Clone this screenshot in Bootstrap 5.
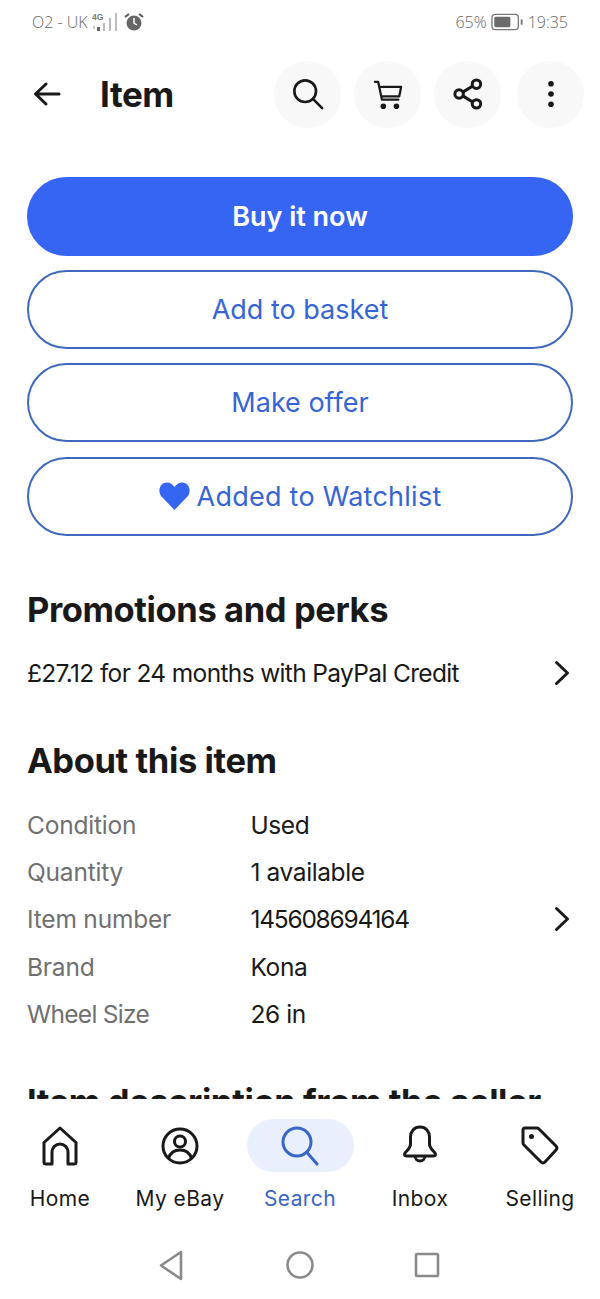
<!DOCTYPE html>
<html lang="en">
<head>
<meta charset="utf-8">
<title>Item</title>
<link href="https://cdn.jsdelivr.net/npm/bootstrap@5.3.0/dist/css/bootstrap.min.css" rel="stylesheet">
<style>
html,body{height:100%}
body{font-family:Inter,"Liberation Sans",sans-serif;color:#191919;background:#fff;overflow:hidden}
.screen{height:1299px;width:600px}
.statusbar{height:44px;padding:0 32px;color:#666;font-size:16px;font-weight:300;font-family:"Open Sans",sans-serif}
.appbar{height:100px;padding:0 16px 0 33px}
.appbar h1{font-size:35px;font-weight:700;margin:0 0 0 39px;letter-spacing:-.45px}
.roundbtn{width:67px;height:67px;border-radius:50%;background:#f8f8f8;border:0;padding:0}
.appbar .gapper{gap:13px}
.roundbtn.lastone{margin-left:3px}
.roundbtn.firstone{margin-right:0}
.content{padding:33px 27px 0;overflow:hidden;min-height:0}
.pillbtn{height:79px;border-radius:40px;font-size:27px;line-height:1;color:#3665d3;border:2px solid #3f69bd;background:#fff;padding:0}
.pillbtn.solid{background:#3665f3;border-color:#3665f3;color:#fff;font-weight:600}
.pillbtn .watch{letter-spacing:.25px}
.watchrow{gap:7px}
.stack{gap:14.2px}
.secthead{font-size:34.5px;font-weight:700;line-height:40px;margin:0;letter-spacing:-.4px}
.sect-promo{margin-top:54px}
.promo{margin-top:27px;font-size:24.5px;line-height:32px;letter-spacing:-.65px;padding-right:3px}
.sect-about{margin-top:52px}
.specs{margin-top:28px}
.spec{font-size:24.5px;line-height:32px;margin-bottom:15.4px;letter-spacing:-.2px;padding-right:3px}
.spec dt{font-weight:400;color:#707070;width:223.500px;flex:none;margin:0}
.spec dd{margin:0;letter-spacing:-.4px}
.spec dd.digits{letter-spacing:-1.25px}
.spec dt.wheel{letter-spacing:-.7px}
.sect-desc{margin-top:52px}
.tabbar{height:200px;background:#fff}
.tabs-row{padding-top:20px}
.tabitem{width:120px;font-size:21px;line-height:28px;color:#191919;gap:13px;letter-spacing:.4px;text-decoration:none}
.tabicon{height:53px;width:107px;border-radius:27px}
.tabitem.on{color:#3a66c4}
.tabitem.on .tabicon{background:#e9effc}
.softkeys{height:85px;gap:93px;padding-top:18px}
</style>
</head>
<body>
<div class="screen d-flex flex-column">
  <div class="statusbar d-flex align-items-center justify-content-between flex-shrink-0">
    <div class="d-flex align-items-center"><span class="me-1">O2 - UK</span>
      <svg class="me-1" width="28" height="24" viewBox="0 0 28 24" fill="#bbb"><rect x="1" y="16" width="2" height="3" fill="#ccc"/><rect x="5" y="17" width="3" height="4" fill="#666"/><rect x="11" y="13" width="2" height="8"/><rect x="17" y="8" width="2" height="13"/><rect x="23" y="3" width="2" height="18"/><text x="0" y="10" font-size="8.500" font-weight="700" fill="#777" font-family="Liberation Sans">4G</text></svg>
      <svg width="20" height="20" viewBox="0 0 20 20"><circle cx="10" cy="11" r="7.500" fill="#666"/><path d="M10 6v5l3 2" stroke="#fff" stroke-width="1.500" fill="none"/><path d="M1 5l4-3M19 5l-4-3" stroke="#555" stroke-width="2"/></svg>
    </div>
    <div class="d-flex align-items-center gap-1"><span>65%</span>
      <svg width="33" height="18" viewBox="0 0 35 18"><rect x="1" y="1" width="28" height="16" rx="3.500" fill="none" stroke="#777" stroke-width="1.400"/><rect x="3.500" y="3.500" width="17" height="11" rx="1.500" fill="#6a6a6a"/><rect x="31.500" y="6" width="2" height="6" rx="1" fill="#777"/></svg>
      <span>19:35</span>
    </div>
  </div>
  <div class="appbar d-flex align-items-center flex-shrink-0">
    <svg width="28" height="26" viewBox="0 0 28 26" fill="none" stroke="#191919" stroke-width="3" stroke-linecap="round" stroke-linejoin="round"><path d="M26 13H2.500M13 3L2.500 13 13 23"/></svg>
    <h1>Item</h1>
    <div class="ms-auto d-flex gapper">
      <button class="roundbtn d-flex align-items-center justify-content-center" aria-label="Search"><svg width="32" height="32" viewBox="0 0 34 34" fill="none" stroke="#191919" stroke-width="2.800" stroke-linecap="round"><circle cx="14" cy="14" r="11.500"/><path d="M22.500 22.500L32 32"/></svg></button>
      <button class="roundbtn d-flex align-items-center justify-content-center" aria-label="Basket"><svg width="30" height="32" viewBox="0 0 32 34" fill="none" stroke="#191919" stroke-width="2.400" stroke-linecap="round" stroke-linejoin="round"><path d="M2 4h3.500l4 19H27M7 9.500h23l-2 10H9"/><circle cx="11" cy="30" r="1.800" fill="#191919"/><circle cx="25" cy="30" r="1.800" fill="#191919"/></svg></button>
      <button class="roundbtn d-flex align-items-center justify-content-center" aria-label="Share"><svg width="30" height="32" viewBox="0 0 32 34" fill="none" stroke="#191919" stroke-width="3.200"><circle cx="25" cy="6.500" r="4.500"/><circle cx="6.500" cy="17" r="4.500"/><circle cx="25" cy="27.500" r="4.500"/><path d="M10.500 15L21 8.500M10.500 19L21 25.500"/></svg></button>
      <button class="roundbtn lastone d-flex align-items-center justify-content-center" aria-label="More"><svg width="8" height="28" viewBox="0 0 8 30" fill="#191919"><circle cx="4" cy="4" r="3"/><circle cx="4" cy="15" r="3"/><circle cx="4" cy="26" r="3"/></svg></button>
    </div>
  </div>
  <div class="content flex-grow-1">
    <div class="d-flex flex-column stack">
      <button class="pillbtn solid">Buy it now</button>
      <button class="pillbtn">Add to basket</button>
      <button class="pillbtn">Make offer</button>
      <button class="pillbtn watchrow d-flex align-items-center justify-content-center"><svg width="31" height="28" viewBox="0 0 31 28" fill="#3665f3"><path d="M15.500 28L2.500 14.500C-1 10.500 0 3.500 4.500 1.300 8.500-.7 13 1 15.500 5 18 1 22.500-.7 26.500 1.300 31 3.500 32 10.500 28.500 14.500Z"/></svg><span class="watch">Added to Watchlist</span></button>
    </div>
    <h2 class="secthead sect-promo">Promotions and perks</h2>
    <div class="promo d-flex align-items-center justify-content-between">
      <span>£27.12 for 24 months with PayPal Credit</span>
      <svg width="16" height="26" viewBox="0 0 16 26" fill="none" stroke="#191919" stroke-width="3" stroke-linecap="round" stroke-linejoin="round"><path d="M2.500 2.500L13.500 13 2.500 23.500"/></svg>
    </div>
    <h2 class="secthead sect-about">About this item</h2>
    <dl class="specs mb-0">
      <div class="spec d-flex"><dt>Condition</dt><dd>Used</dd></div>
      <div class="spec d-flex"><dt>Quantity</dt><dd>1 available</dd></div>
      <div class="spec d-flex align-items-center"><dt>Item number</dt><dd class="digits">145608694164</dd><svg class="ms-auto" width="16" height="26" viewBox="0 0 16 26" fill="none" stroke="#191919" stroke-width="3" stroke-linecap="round" stroke-linejoin="round"><path d="M2.500 2.500L13.500 13 2.500 23.500"/></svg></div>
      <div class="spec d-flex"><dt>Brand</dt><dd>Kona</dd></div>
      <div class="spec d-flex"><dt class="wheel">Wheel Size</dt><dd>26 in</dd></div>
    </dl>
    <h2 class="secthead sect-desc">Item description from the seller</h2>
  </div>
  <nav class="tabbar flex-shrink-0">
    <div class="d-flex tabs-row">
      <a class="tabitem d-flex flex-column align-items-center" href="#"><span class="tabicon d-flex align-items-center justify-content-center"><svg width="38" height="40" viewBox="0 0 38 40" fill="none" stroke="#191919" stroke-width="3" stroke-linejoin="round"><path d="M3 16.500L19 2l16 14.500V36a2 2 0 0 1-2 2h-6V26a8 8 0 0 0-16 0v12H5a2 2 0 0 1-2-2Z"/></svg></span><span>Home</span></a>
      <a class="tabitem d-flex flex-column align-items-center" href="#"><span class="tabicon d-flex align-items-center justify-content-center"><svg width="38" height="38" viewBox="0 0 38 38" fill="none" stroke="#191919" stroke-width="3"><circle cx="19" cy="19" r="17"/><circle cx="19" cy="14.500" r="5.500"/><path d="M7.500 31c2-5.500 6.500-8 11.500-8s9.500 2.500 11.500 8"/></svg></span><span>My eBay</span></a>
      <a class="tabitem on d-flex flex-column align-items-center" href="#"><span class="tabicon d-flex align-items-center justify-content-center"><svg width="38" height="40" viewBox="0 0 38 40" fill="none" stroke="#3a66c4" stroke-width="3" stroke-linecap="round"><circle cx="16" cy="16" r="14"/><path d="M26 26.500L36 38"/></svg></span><span>Search</span></a>
      <a class="tabitem d-flex flex-column align-items-center" href="#"><span class="tabicon d-flex align-items-center justify-content-center"><svg width="36" height="42" viewBox="0 0 36 42" fill="none" stroke="#191919" stroke-width="3" stroke-linejoin="round"><path d="M18 2c-6 0-9.500 4.500-9.500 10v7c0 4-3 6-5.500 9-1 1.500-.5 3 1.500 3h27c2 0 2.500-1.500 1.500-3-2.500-3-5.500-5-5.500-9v-7C27.500 6.500 24 2 18 2Z"/><path d="M13 31a5 5 0 0 0 10 0"/></svg></span><span>Inbox</span></a>
      <a class="tabitem d-flex flex-column align-items-center" href="#"><span class="tabicon d-flex align-items-center justify-content-center"><svg width="38" height="40" viewBox="0 0 38 40" fill="none" stroke="#191919" stroke-width="3" stroke-linejoin="round"><path d="M4 2h12a3 3 0 0 1 2 1l17 17a3 3 0 0 1 0 4L24 36a3 3 0 0 1-4 0L3 19a3 3 0 0 1-1-2V4a2 2 0 0 1 2-2Z"/><circle cx="10.500" cy="10.500" r="2.500" fill="#191919" stroke="none"/></svg></span><span>Selling</span></a>
    </div>
    <div class="softkeys d-flex justify-content-center align-items-center">
      <svg width="34" height="34" viewBox="0 0 34 34" fill="none" stroke="#8a8a8a" stroke-width="2.600" stroke-linejoin="round"><path d="M25 4V31L5 17.500Z"/></svg>
      <svg width="34" height="34" viewBox="0 0 34 34" fill="none" stroke="#8a8a8a" stroke-width="2.600"><circle cx="17" cy="17" r="12.500"/></svg>
      <svg width="34" height="34" viewBox="0 0 34 34" fill="none" stroke="#8a8a8a" stroke-width="2.600" stroke-linejoin="round"><rect x="6" y="6" width="22" height="22" rx="1"/></svg>
    </div>
  </nav>
</div>
<script src="https://cdn.jsdelivr.net/npm/bootstrap@5.3.0/dist/js/bootstrap.bundle.min.js"></script>
</body>
</html>
